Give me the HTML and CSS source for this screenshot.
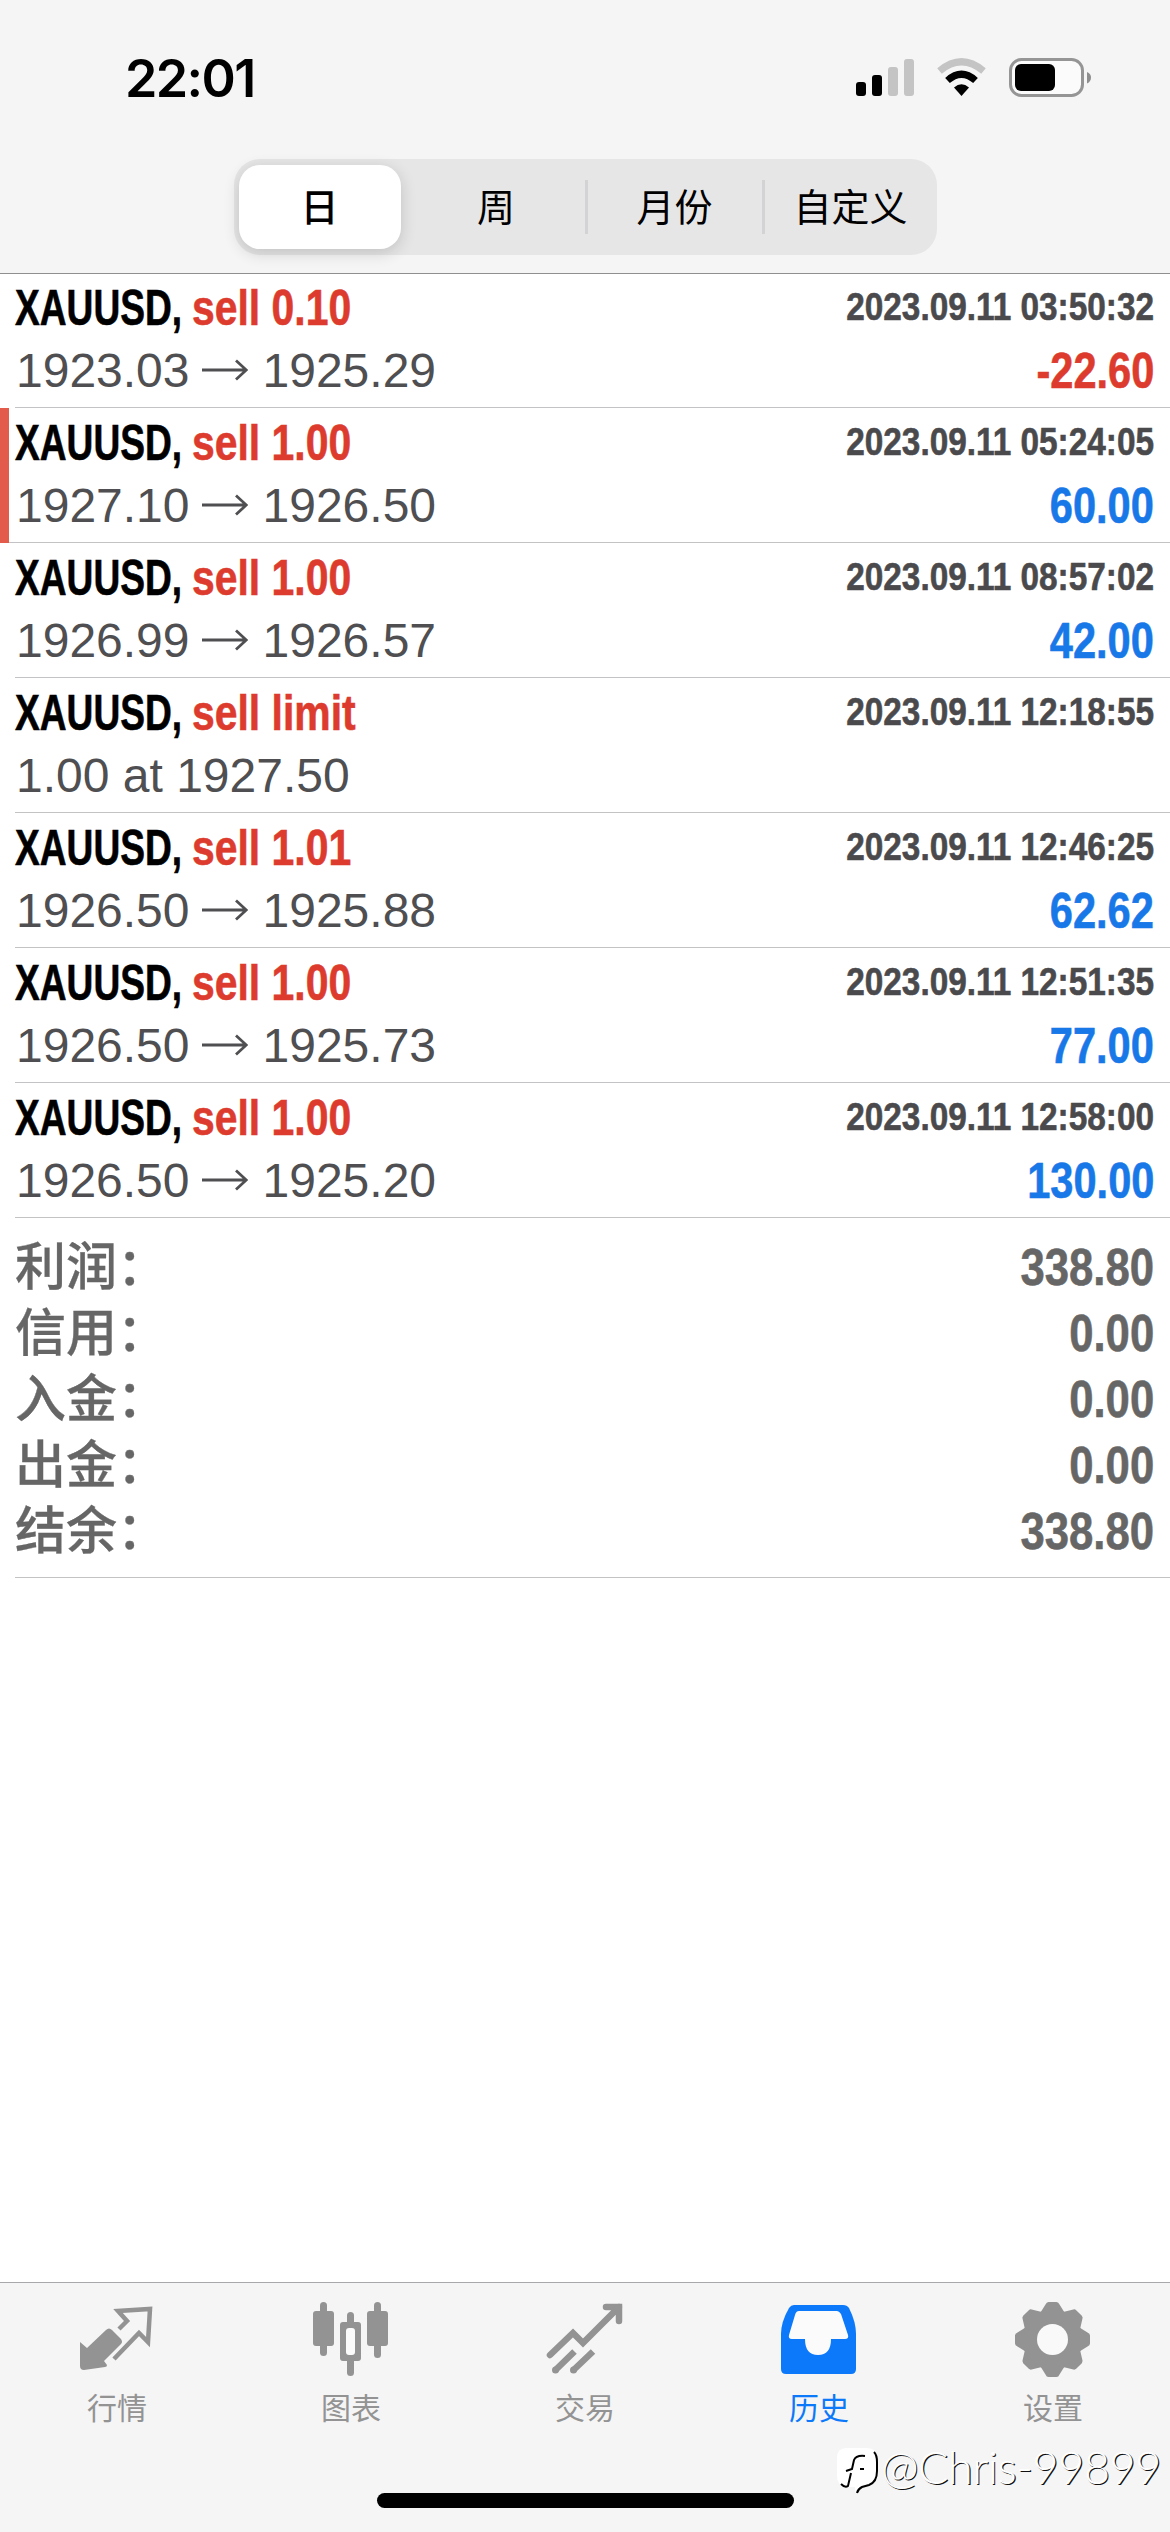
FILE: index.html
```html
<!DOCTYPE html>
<html lang="zh-CN">
<head>
<meta charset="utf-8">
<title>历史</title>
<link rel="stylesheet" href="styles.css">
</head>
<body>
<svg width="0" height="0" class="defs" aria-hidden="true">
  <symbol id="arrow" viewBox="0 0 46 22"><path d="M0 11H44M34 1.5L44.3 11L34 20.5" fill="none" stroke="currentColor" stroke-width="2.8"/></symbol>
</svg>
<div class="screen">
  <header class="header">
    <div class="status">
      <span class="clock">22:01</span>
      <svg class="status-icons" width="236" height="40" viewBox="0 0 236 40">
        <rect x="0" y="24" width="10" height="14" rx="3"/>
        <rect x="16" y="17" width="10" height="21" rx="3"/>
        <rect x="32" y="9" width="10" height="29" rx="3" fill="#c4c4c4"/>
        <rect x="48" y="1" width="10" height="37" rx="3" fill="#c4c4c4"/>
        <path d="M83.500 13Q105.500 -5.500 127.500 13" fill="none" stroke="#c4c4c4" stroke-width="7"/>
        <path d="M91.500 22.500Q105.500 10 119.500 22.500" fill="none" stroke="#000" stroke-width="7"/>
        <path d="M98 29.500Q105.500 23 113 29.500L105.500 38Z"/>
        <rect x="154.500" y="1.500" width="72" height="36" rx="11" fill="#fbfbfb" stroke="#959595" stroke-width="3"/>
        <rect x="159" y="6" width="40" height="27" rx="6"/>
        <path d="M231 14Q235 15.500 235 19.500T231 25.500Z" fill="#8e8e8e"/>
      </svg>
    </div>
    <nav class="segments">
      <span class="segment selected">日</span>
      <span class="segment">周</span>
      <span class="segment divided">月份</span>
      <span class="segment divided">自定义</span>
    </nav>
  </header>

  <main class="content">
    <section class="deals">
      <article class="deal">
        <div class="title"><span class="symbol">XAUUSD,</span><span class="side">sell 0.10</span></div><time>2023.09.11 03:50:32</time>
        <div class="price">1923.03<svg class="arrow"><use href="#arrow"/></svg>1925.29</div><div class="profit loss">-22.60</div>
      </article>
      <article class="deal marked">
        <div class="title"><span class="symbol">XAUUSD,</span><span class="side">sell 1.00</span></div><time>2023.09.11 05:24:05</time>
        <div class="price">1927.10<svg class="arrow"><use href="#arrow"/></svg>1926.50</div><div class="profit">60.00</div>
      </article>
      <article class="deal">
        <div class="title"><span class="symbol">XAUUSD,</span><span class="side">sell 1.00</span></div><time>2023.09.11 08:57:02</time>
        <div class="price">1926.99<svg class="arrow"><use href="#arrow"/></svg>1926.57</div><div class="profit">42.00</div>
      </article>
      <article class="deal">
        <div class="title"><span class="symbol">XAUUSD,</span><span class="side">sell limit</span></div><time>2023.09.11 12:18:55</time>
        <div class="price">1.00 at 1927.50</div>
      </article>
      <article class="deal">
        <div class="title"><span class="symbol">XAUUSD,</span><span class="side">sell 1.01</span></div><time>2023.09.11 12:46:25</time>
        <div class="price">1926.50<svg class="arrow"><use href="#arrow"/></svg>1925.88</div><div class="profit">62.62</div>
      </article>
      <article class="deal">
        <div class="title"><span class="symbol">XAUUSD,</span><span class="side">sell 1.00</span></div><time>2023.09.11 12:51:35</time>
        <div class="price">1926.50<svg class="arrow"><use href="#arrow"/></svg>1925.73</div><div class="profit">77.00</div>
      </article>
      <article class="deal">
        <div class="title"><span class="symbol">XAUUSD,</span><span class="side">sell 1.00</span></div><time>2023.09.11 12:58:00</time>
        <div class="price">1926.50<svg class="arrow"><use href="#arrow"/></svg>1925.20</div><div class="profit">130.00</div>
      </article>
    </section>
    <section class="summary">
      <div class="total"><span class="label">利润：</span><span class="amount">338.80</span></div>
      <div class="total"><span class="label">信用：</span><span class="amount">0.00</span></div>
      <div class="total"><span class="label">入金：</span><span class="amount">0.00</span></div>
      <div class="total"><span class="label">出金：</span><span class="amount">0.00</span></div>
      <div class="total"><span class="label">结余：</span><span class="amount">338.80</span></div>
    </section>
  </main>

  <footer class="footer">
    <nav class="tabs">
      <div class="tab">
        <svg width="78" height="78" viewBox="0 0 78 78">
          <path d="M2 43L9 49L28 31Q31 28 34 31L43 40Q45 43 43 45L26 62L29 66Q29 68 27 68L6 71Q2 71 2 67Z" fill="currentColor"/>
          <path d="M41 30L49 22L40 12L72 10L70 43L61 34L36 60" fill="none" stroke="currentColor" stroke-width="4.500"/>
        </svg>
        <span>行情</span>
      </div>
      <div class="tab">
        <svg width="78" height="78" viewBox="0 0 78 78">
          <g fill="currentColor">
            <rect x="1" y="12" width="21" height="35" rx="3"/><rect x="8" y="3" width="7" height="54" rx="3.500"/>
            <rect x="55" y="12" width="21" height="35" rx="3"/><rect x="62" y="3" width="7" height="56" rx="3.500"/>
            <rect x="28" y="23" width="21" height="39" rx="3"/><rect x="35" y="13" width="7" height="64" rx="3.500"/>
          </g>
          <rect x="34" y="29" width="9" height="27" rx="3" fill="#fbfbfb"/>
        </svg>
        <span>图表</span>
      </div>
      <div class="tab">
        <svg width="78" height="78" viewBox="0 0 78 78">
          <path d="M4 56L27 34L37 44L73 8M60 8H73V22" fill="none" stroke="currentColor" stroke-width="6.500" stroke-linecap="round" stroke-linejoin="miter"/>
          <path d="M28.500 52.500L9.500 71M47 52.500L27.500 71" fill="none" stroke="currentColor" stroke-width="6.500"/>
          <circle cx="9.500" cy="71" r="3.500" fill="currentColor"/><circle cx="27.500" cy="71" r="3.500" fill="currentColor"/>
        </svg>
        <span>交易</span>
      </div>
      <div class="tab active">
        <svg width="78" height="78" viewBox="0 0 78 78">
          <path fill="currentColor" d="M14 6H63Q67 6 69 9Q76 23 76 35V70Q76 75 71 75H6Q1 75 1 70V35Q1 23 9 9Q11 6 14 6Z"/>
          <path fill="#fbfbfb" d="M19 12H57Q59 12 61 15L68 36Q69 40 65 40H51Q51 56 38 56T25 40H12Q8 40 9 36L15 16Q16 12 19 12Z"/>
        </svg>
        <span>历史</span>
      </div>
      <div class="tab">
        <svg width="78" height="78" viewBox="0 0 78 78">
          <g fill="currentColor" transform="translate(38.500 40.500)">
            <circle r="30"/>
            <g id="teeth"><path d="M-12 -27L-7 -35Q-6 -37.500 -4 -37.500H4Q6 -37.500 7 -35L12 -27V27L7 35Q6 37.500 4 37.500H-4Q-6 37.500 -7 35L-12 27Z"/></g>
            <use href="#teeth" transform="rotate(45)"/><use href="#teeth" transform="rotate(90)"/><use href="#teeth" transform="rotate(135)"/>
          </g>
          <circle cx="38.500" cy="40.500" r="15.500" fill="#f9f9f9"/>
        </svg>
        <span>设置</span>
      </div>
    </nav>
    <div class="home-indicator"></div>
    <div class="watermark">
      <svg width="44" height="50" viewBox="0 0 44 50">
        <path d="M10 2H31Q41 2 41 12V26Q41 38 31 40Q24 41 21 47Q19 47 19 41H10Q1 40 1 30V12Q1 2 10 2Z" fill="#fff"/>
        <path d="M38 6Q41 9 41 16V25Q41 36 33 39L26 41Q22 43 21 47" fill="none" stroke="#000" stroke-width="2"/>
        <path d="M29 10Q20 9 18 14L16 23L10 25M24 23H28M15 27L12 40Q9 42 5 38" fill="none" stroke="#000" stroke-width="2"/>
      </svg>
      <span>@Chris-99899</span>
    </div>
  </footer>
</div>
</body>
</html>
```
FILE: styles.css
```css
* { box-sizing: border-box; }

body {
  margin: 0;
  background: #fff;
  font-family: "Liberation Sans", "Noto Sans CJK SC", sans-serif;
}

.defs { position: absolute; }

.screen {
  display: flex;
  flex-direction: column;
  width: 1170px;
  height: 2532px;
  overflow: hidden;
}

.header {
  height: 273px;
  background: #f5f5f5;
  box-shadow: 0 1px #8f8f8f;
}

.status {
  display: flex;
  justify-content: space-between;
  align-items: flex-start;
  height: 159px;
  padding: 58px 78px 0 125px;
}

.clock {
  font: 600 52px/41px Inter, sans-serif;
  letter-spacing: -1.6px;
}

.segments {
  display: grid;
  grid-template-columns: 174px 177px 177px 175px;
  width: 703px;
  height: 96px;
  margin: 0 auto;
  border-radius: 26px;
  background: #e6e6e7;
}

.segment {
  display: flex;
  align-items: center;
  justify-content: center;
  padding-bottom: 5px;
  font: 400 38px/54px "Noto Sans CJK SC", sans-serif;
}

.segment.divided {
  height: 54px;
  margin-top: 21px;
  border-left: 3px solid #d3d3d5;
}

.segment.selected {
  width: 162px;
  height: 84px;
  margin: 6px 0 0 5px;
  border-radius: 21px;
  background: #fff;
  box-shadow: 0 4px 16px rgba(0, 0, 0, .16);
  font-weight: 500;
}

.content { flex: 1; }

.deal {
  display: grid;
  grid-template-columns: 1fr auto;
  grid-template-rows: 63px 63px;
  align-items: start;
  height: 135px;
  margin-left: 15px;
  padding: 3px 16px 0 0;
  border-bottom: 1px solid #c3c3c5;
}

.deal.marked {
  margin-left: 0;
  padding-left: 6px;
  border-left: 9px solid #e25b4b;
  border-bottom: 0;
  background: linear-gradient(#c3c3c5, #c3c3c5) right bottom / 100% 1px no-repeat;
}

.title,
.deal time,
.profit,
.amount {
  font-weight: 700;
  white-space: nowrap;
  -webkit-text-stroke: .6px currentColor;
}

.title {
  display: flex;
  font-size: 49.5px;
  line-height: 63px;
}

.symbol {
  width: 177px;
  transform: scaleX(.75);
  transform-origin: left;
}

.side {
  color: #dc3b2d;
  transform: scaleX(.826);
  transform-origin: left;
}

.deal time {
  justify-self: end;
  margin-top: -1px;
  font-size: 39px;
  line-height: 63px;
  color: #4a4a4d;
  transform: scaleX(.855);
  transform-origin: right;
}

.price {
  padding-left: 1px;
  font-size: 48px;
  line-height: 64px;
  color: #4f4f52;
  white-space: nowrap;
}

.arrow {
  width: 46px;
  height: 22px;
  margin: 0 15px 6px 12px;
}

.profit {
  justify-self: end;
  font-size: 49.5px;
  line-height: 63px;
  color: #1878e8;
  transform: scaleX(.84);
  transform-origin: right;
}

.profit.loss { color: #dc3b2d; }

.summary {
  height: 360px;
  margin-left: 15px;
  padding: 12px 16px 0 0;
  border-bottom: 1px solid #c3c3c5;
}

.total {
  display: flex;
  justify-content: space-between;
  align-items: baseline;
  height: 66px;
  line-height: 66px;
  color: #666;
}

.label {
  font-family: "Noto Sans CJK SC", sans-serif;
  font-size: 51px;
  font-weight: 500;
  -webkit-text-stroke: .3px #666;
}

.amount {
  font-size: 52px;
  transform: scaleX(.84);
  transform-origin: right;
}

.footer {
  position: relative;
  height: 250px;
  border-top: 1px solid #a8a8aa;
  background: #f5f5f5;
}

.tabs {
  display: grid;
  grid-template-columns: repeat(5, 1fr);
  padding-top: 16px;
  color: #939393;
}

.tab {
  display: flex;
  flex-direction: column;
  align-items: center;
  gap: 8px;
  font: 400 30px/42px "Noto Sans CJK SC", sans-serif;
}

.tab.active { color: #0c79fb; }

.home-indicator {
  width: 417px;
  height: 15px;
  margin: 66px auto 0;
  border-radius: 8px;
  background: #000;
}

.watermark {
  position: absolute;
  right: 9px;
  bottom: 36px;
  display: flex;
  align-items: flex-start;
  gap: 1px;
  font: 300 45px/42px Lato, sans-serif;
  letter-spacing: -.4px;
  color: #fff;
  text-shadow: 1.2px 1.2px 0 #111;
}
```
